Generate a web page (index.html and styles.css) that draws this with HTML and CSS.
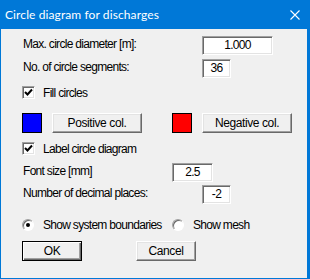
FILE: index.html
```html
<!DOCTYPE html>
<html lang="en">
<head>
    <meta charset="UTF-8">
    <title>Circle diagram for discharges</title>
    <link rel="stylesheet" href="styles.css">
</head>
<body>
<div class="dialog">
    <div class="titlebar">
        <span class="title">Circle diagram for discharges</span>
        <svg class="close" width="10" height="10" viewBox="0 0 10 10">
            <path d="M0.5 0.5 L9.5 9.5 M9.5 0.5 L0.5 9.5" stroke="#fff" stroke-width="1.1" fill="none"/>
        </svg>
    </div>

    <div class="content">
        <div class="row row-diam">
            <span class="label">Max. circle diameter [m]:</span>
            <div class="field field-wide">1.000</div>
        </div>
        <div class="row row-seg">
            <span class="label">No. of circle segments:</span>
            <div class="field field-small">36</div>
        </div>

        <div class="check row-fill">
            <span class="checkbox">
                <svg width="9" height="9" viewBox="0 0 9 9"><path d="M1 4 L3.5 6.5 L8 1.5" stroke="#000" stroke-width="2" fill="none"/></svg>
            </span>
            <span>Fill circles</span>
        </div>

        <div class="colors">
            <span class="swatch blue"></span>
            <div class="button">Positive col.</div>
            <span class="swatch red"></span>
            <div class="button">Negative col.</div>
        </div>

        <div class="check row-label">
            <span class="checkbox">
                <svg width="9" height="9" viewBox="0 0 9 9"><path d="M1 4 L3.5 6.5 L8 1.5" stroke="#000" stroke-width="2" fill="none"/></svg>
            </span>
            <span>Label circle diagram</span>
        </div>

        <div class="row row-font">
            <span class="label label-short">Font size [mm]</span>
            <div class="field field-mid">2.5</div>
        </div>
        <div class="row row-dec">
            <span class="label">Number of decimal places:</span>
            <div class="field field-small">-2</div>
        </div>

        <div class="radios">
            <div class="radio-item first">
                <span class="radio checked"></span>
                <span>Show system boundaries</span>
            </div>
            <div class="radio-item">
                <span class="radio"></span>
                <span>Show mesh</span>
            </div>
        </div>

        <div class="actions">
            <div class="button default">OK</div>
            <div class="button">Cancel</div>
        </div>
    </div>
</div>
</body>
</html>
```

FILE: styles.css
```css
body {
    margin: 0;
    font-family: "Liberation Sans", Arial, sans-serif;
    font-size: 12px;
    letter-spacing: -0.7px;
    color: #000;
    background: #fff;
}

.dialog {
    width: 306px;
    height: 278px;
    border: 1px solid #0078d7;
    border-right-width: 3px;
    border-top: none;
    background-color: #f0f0f0;
    display: flex;
    flex-direction: column;
}

.titlebar {
    height: 29px;
    background-color: #0078d7;
    display: flex;
    align-items: center;
    padding-left: 4px;
    padding-right: 7px;
}

.title {
    flex: 1;
    color: #fff;
    font-family: Lato, "Noto Sans", sans-serif;
    font-size: 12px;
    letter-spacing: 0.1px;
}

.content {
    padding: 7px 0 0 21px;
    display: flex;
    flex-direction: column;
}

.row {
    display: flex;
    align-items: flex-start;
    height: 19px;
}

.label {
    width: 179px;
    padding-left: 1px;
    padding-top: 1px;
    line-height: 14px;
}

.label-short {
    width: 149px;
}

.row-seg { margin-top: 4px; }
.row-fill { margin-top: 8px; }
.colors { margin-top: 13px; }
.row-label { margin-top: 9px; }
.row-font { margin-top: 8px; }
.row-dec { margin-top: 3px; }
.radios { margin-top: 14px; }
.actions { margin-top: 10px; }

.field {
    box-sizing: border-box;
    height: 19px;
    background: #fff;
    border-top: 1px solid #a0a0a0;
    border-left: 1px solid #a0a0a0;
    border-right: 1px solid #fff;
    border-bottom: 1px solid #fff;
    box-shadow: inset 1px 1px 0 #696969, inset -1px -1px 0 #e3e3e3;
    text-align: center;
    line-height: 17px;
}

.field-wide { width: 71px; }
.field-small { width: 29px; }
.field-mid { width: 41px; }

.check {
    display: flex;
    align-items: center;
    height: 13px;
    gap: 8px;
}

.checkbox {
    box-sizing: border-box;
    width: 13px;
    height: 13px;
    background: #fff;
    border-top: 1px solid #a0a0a0;
    border-left: 1px solid #a0a0a0;
    border-right: 1px solid #fff;
    border-bottom: 1px solid #fff;
    box-shadow: inset 1px 1px 0 #696969, inset -1px -1px 0 #e3e3e3;
    display: flex;
    align-items: center;
    justify-content: center;
}

.colors {
    display: flex;
    align-items: center;
    height: 21px;
}

.swatch {
    box-sizing: border-box;
    width: 20px;
    height: 20px;
    border: 1px solid #000;
    margin-top: 1px;
}

.blue {
    background-color: #0000ff;
    margin-right: 10px;
}

.red {
    background-color: #ff0000;
    margin-left: 30px;
    margin-right: 10px;
}

.button {
    box-sizing: border-box;
    width: 90px;
    height: 20px;
    background-color: #f0f0f0;
    border-top: 1px solid #fff;
    border-left: 1px solid #fff;
    border-right: 1px solid #696969;
    border-bottom: 1px solid #696969;
    box-shadow: inset -1px -1px 0 #a0a0a0, inset 1px 1px 0 #e3e3e3;
    text-align: center;
    line-height: 18px;
    letter-spacing: -0.4px;
}

.radios {
    display: flex;
    align-items: center;
    height: 13px;
}

.radio-item {
    display: flex;
    align-items: center;
    gap: 9px;
}

.radio-item.first {
    width: 150px;
}

.radio {
    box-sizing: border-box;
    width: 12px;
    height: 12px;
    border-radius: 50%;
    background: #fff;
    border: 1px solid;
    border-color: #a0a0a0 #fff #fff #a0a0a0;
    box-shadow: inset 1px 1px 0 #696969;
    display: flex;
    align-items: center;
    justify-content: center;
}

.radio.checked::after {
    content: "";
    width: 4px;
    height: 4px;
    border-radius: 50%;
    background: #000;
}

.actions {
    display: flex;
    gap: 54px;
}

.actions .button {
    width: 60px;
}

.button.default {
    border: 1px solid #000;
    box-shadow: inset 1px 1px 0 #fff, inset -1px -1px 0 #696969, inset -2px -2px 0 #a0a0a0;
}
```
